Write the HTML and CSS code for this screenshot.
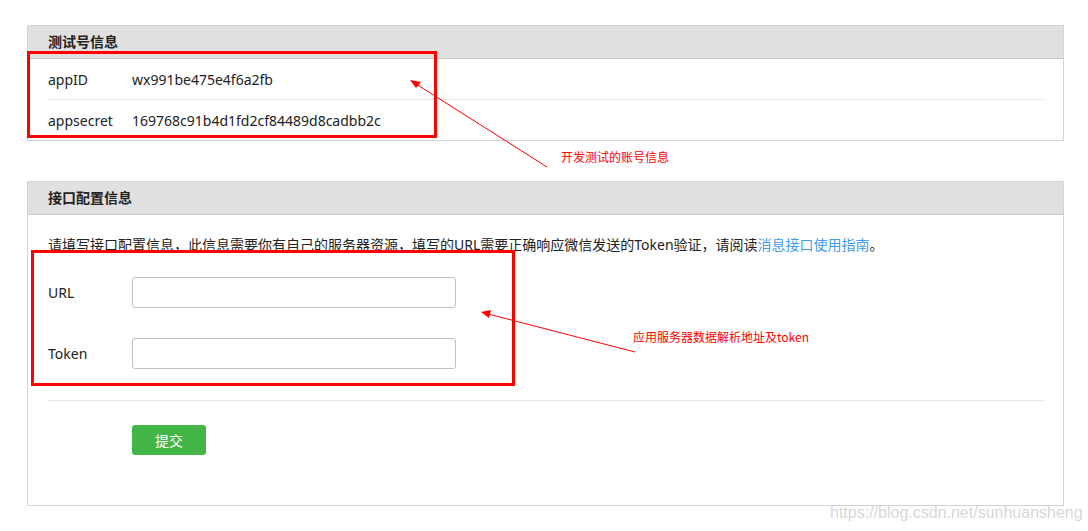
FILE: index.html
```html
<!DOCTYPE html>
<html lang="zh-CN">
<head>
    <meta charset="UTF-8">
    <meta name="viewport" content="width=device-width, initial-scale=1.0">
    <title>测试号管理</title>
    <link rel="stylesheet" href="styles.css">
</head>
<body>
    <div class="page">
        <div class="panel">
            <div class="panel-header">测试号信息</div>
            <div class="panel-body">
                <div class="info-row">
                    <span class="info-label">appID</span>
                    <span class="info-value">wx991be475e4f6a2fb</span>
                </div>
                <div class="info-row">
                    <span class="info-label">appsecret</span>
                    <span class="info-value">169768c91b4d1fd2cf84489d8cadbb2c</span>
                </div>
            </div>
        </div>

        <div class="panel">
            <div class="panel-header">接口配置信息</div>
            <div class="panel-body">
                <p class="desc">请填写接口配置信息，此信息需要你有自己的服务器资源，填写的URL需要正确响应微信发送的Token验证，请阅读<a href="#">消息接口使用指南</a>。</p>
                <div class="form">
                    <div class="form-row">
                        <label class="form-label">URL</label>
                        <input class="form-input" type="text">
                    </div>
                    <div class="form-row">
                        <label class="form-label">Token</label>
                        <input class="form-input" type="text">
                    </div>
                </div>
                <div class="form-actions">
                    <button class="submit-button">提交</button>
                </div>
            </div>
        </div>

        <!-- annotations drawn on top of the screenshot -->
        <div class="mark mark-account"></div>
        <div class="mark mark-config"></div>
        <svg class="arrows" width="1088" height="531" viewBox="0 0 1088 531">
            <line x1="547" y1="167" x2="416" y2="84" stroke="#ff0000" stroke-width="1"/>
            <polygon points="410,80 421,82 416,88" fill="#ff0000"/>
            <line x1="635" y1="352" x2="488" y2="314" stroke="#ff0000" stroke-width="1"/>
            <polygon points="481,312 491,310 489,318" fill="#ff0000"/>
        </svg>
        <div class="note note-account">开发测试的账号信息</div>
        <div class="note note-config">应用服务器数据解析地址及token</div>
        <div class="watermark">https://blog.csdn.net/sunhuansheng</div>
    </div>
</body>
</html>
```

FILE: styles.css
```css
body {
    margin: 0;
    padding: 0;
    background: #fff;
    color: #222;
    font-family: "Noto Sans", "Noto Sans CJK SC", sans-serif;
    font-size: 14px;
}
.page {
    position: relative;
    width: 1088px;
    height: 531px;
    padding: 25px 0 0 27px;
    box-sizing: border-box;
    overflow: hidden;
}
.panel {
    width: 1037px;
    box-sizing: border-box;
    border: 1px solid #d4d4d4;
    margin-bottom: 40px;
}
.panel-header {
    height: 32px;
    line-height: 32px;
    padding: 0 20px;
    background-color: #e0e0e0;
    border-bottom: 1px solid #c8c8c8;
    font-weight: bold;
    color: #222;
}
.panel-body {
    padding: 0 20px;
}
.info-row {
    display: flex;
    align-items: center;
    height: 40px;
}
.info-row + .info-row {
    border-top: 1px solid #e4e4e4;
}
.info-label {
    width: 84px;
}
.desc {
    margin: 19px 0 0;
    line-height: 22px;
}
.desc a {
    color: #459ae9;
    text-decoration: none;
}
.form {
    display: flex;
    flex-direction: column;
    gap: 30px;
    margin-top: 21px;
    padding-bottom: 31px;
    border-bottom: 1px solid #e4e4e4;
}
.form-row {
    display: flex;
    align-items: center;
}
.form-label {
    width: 84px;
}
.form-input {
    width: 324px;
    height: 31px;
    box-sizing: border-box;
    margin: 0;
    border: 1px solid #c0c0c0;
    border-radius: 3px;
    background: #fff;
}
.form-actions {
    padding: 24px 0 50px 84px;
}
.submit-button {
    display: block;
    width: 74px;
    height: 30px;
    border: none;
    border-radius: 3px;
    background-color: #44b549;
    color: #fff;
    font-family: "Noto Sans CJK SC", sans-serif;
    font-size: 14px;
    cursor: pointer;
}
.mark {
    position: absolute;
    border: 3px solid #ff0000;
    box-sizing: border-box;
}
.mark-account {
    left: 27px;
    top: 51px;
    width: 410px;
    height: 87px;
}
.mark-config {
    left: 31px;
    top: 250px;
    width: 484px;
    height: 136px;
}
.arrows {
    position: absolute;
    left: 0;
    top: 0;
}
.note {
    position: absolute;
    color: #ff0000;
    font-size: 12px;
    line-height: 16px;
    font-family: "Noto Sans CJK SC", sans-serif;
}
.note-account {
    left: 561px;
    top: 149px;
}
.note-config {
    left: 633px;
    top: 329px;
}
.watermark {
    position: absolute;
    left: 830px;
    top: 503px;
    color: #d8d8d8;
    font-family: "Liberation Sans", Arial, sans-serif;
    font-size: 16px;
    line-height: 20px;
}
```
